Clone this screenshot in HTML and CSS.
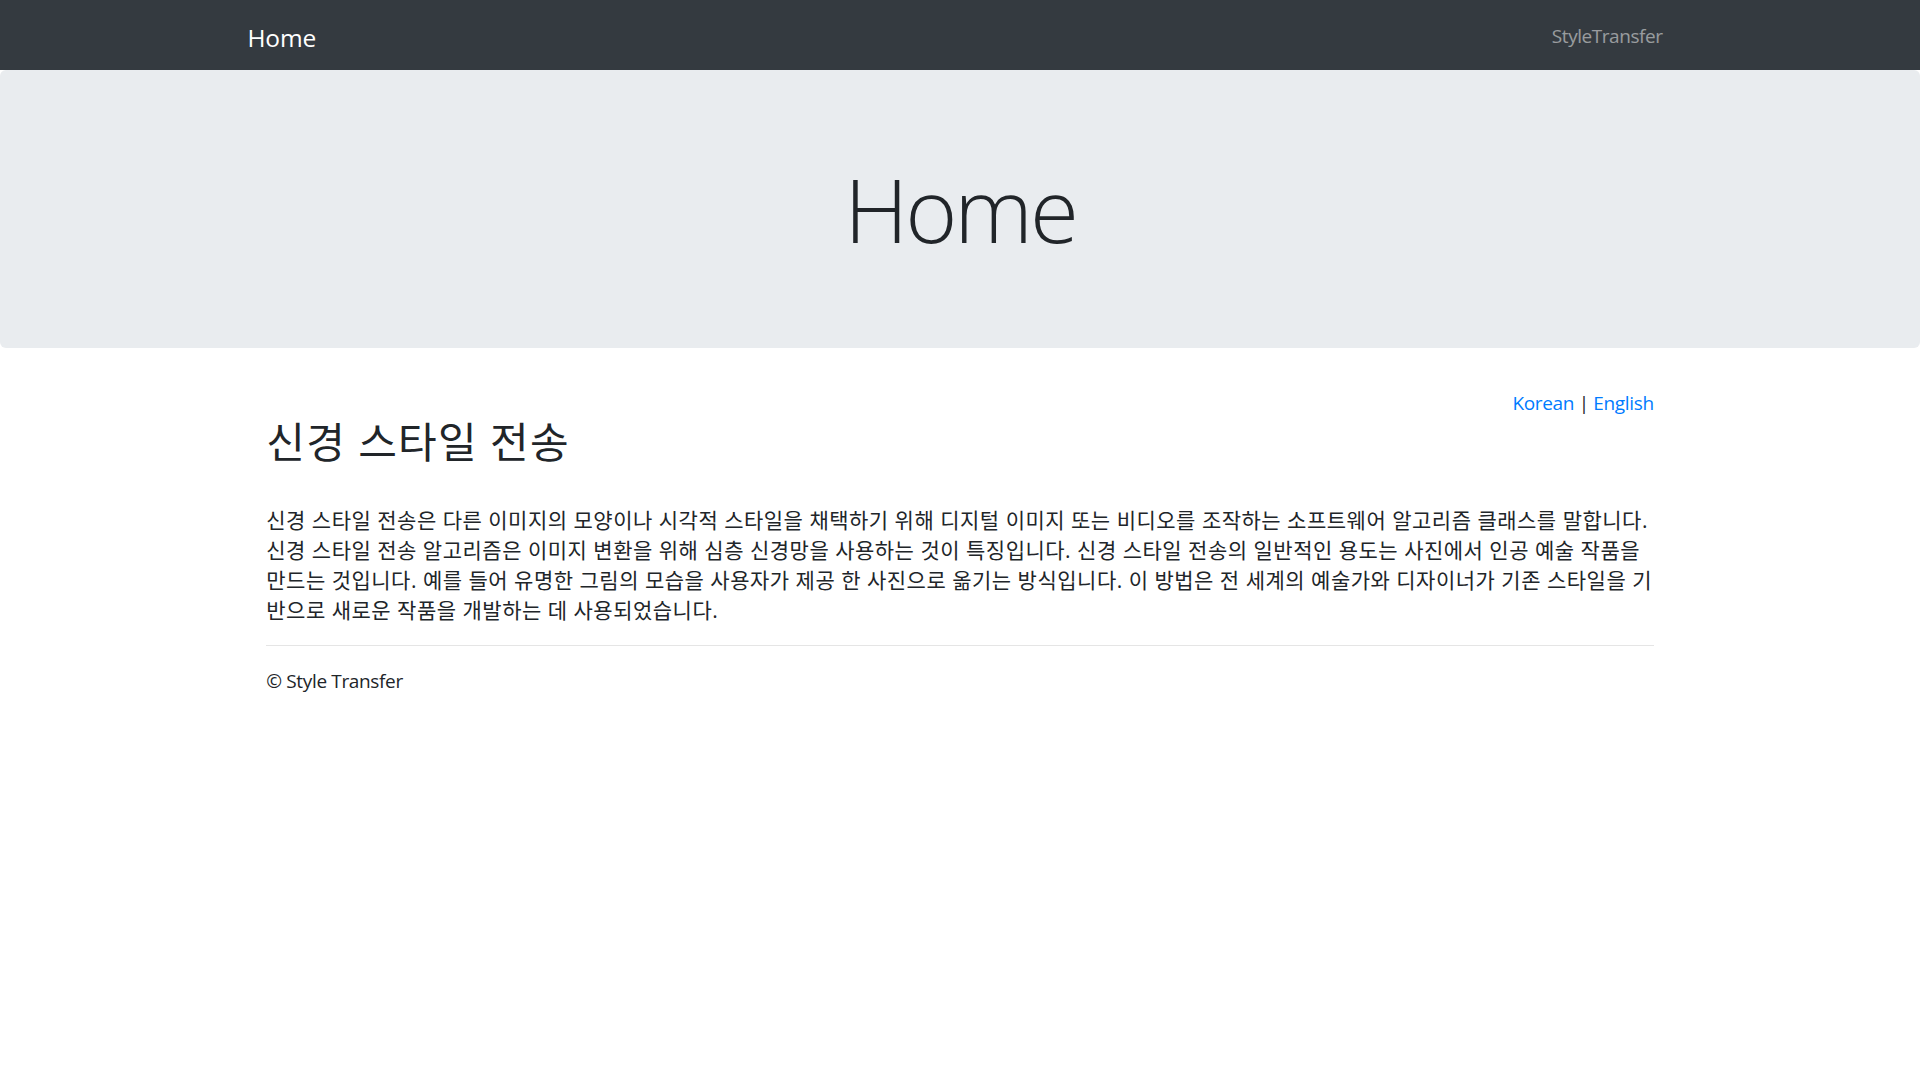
FILE: index.html
```html
<!DOCTYPE html>
<html lang="ko">
<head>
<meta charset="utf-8">
<title>Home - StyleTransfer</title>
<link rel="stylesheet" href="styles.css">
</head>
<body>
<nav class="navbar">
  <div class="nav-container">
    <a class="brand" href="#">Home</a>
    <a class="nav-link" href="#">StyleTransfer</a>
  </div>
</nav>
<div class="jumbotron">
  <h1 class="display">Home</h1>
</div>
<div class="container">
  <div class="lang"><a href="#">Korean</a> | <a href="#">English</a></div>
  <h2 class="title">신경 스타일 전송</h2>
  <p class="body-text">신경 스타일 전송은 다른 이미지의 모양이나 시각적 스타일을 채택하기 위해 디지털 이미지 또는 비디오를 조작하는 소프트웨어 알고리즘 클래스를 말합니다. 신경 스타일 전송 알고리즘은 이미지 변환을 위해 심층 신경망을 사용하는 것이 특징입니다. 신경 스타일 전송의 일반적인 용도는 사진에서 인공 예술 작품을 만드는 것입니다. 예를 들어 유명한 그림의 모습을 사용자가 제공 한 사진으로 옮기는 방식입니다. 이 방법은 전 세계의 예술가와 디자이너가 기존 스타일을 기반으로 새로운 작품을 개발하는 데 사용되었습니다.</p>
  <hr class="divider">
  <footer>
    <p class="footer-text">© Style Transfer</p>
  </footer>
</div>
</body>
</html>
```
FILE: styles.css
```css
* { box-sizing: border-box; }
html, body { margin: 0; padding: 0; }
body {
  font-family: "Open Sans", "Noto Sans CJK KR", sans-serif;
  font-size: 19px;
  letter-spacing: -0.35px;
  line-height: 30px;
  color: #212529;
  background: #fff;
}
a { text-decoration: none; }

.navbar {
  background: #343a40;
  padding: 10px 20px;
}
.nav-container {
  width: 1425px;
  margin: 0 auto;
  display: flex;
  justify-content: space-between;
  align-items: center;
}
.brand {
  color: #fff;
  font-size: 24.5px;
  letter-spacing: -0.2px;
  line-height: 37.5px;
  padding: 8.5px 0 4px;
}
.nav-link {
  color: rgba(255,255,255,.5);
  font-size: 19px;
  letter-spacing: -0.45px;
  padding: 11px 10px 9px;
}

.jumbotron {
  background: #e9ecef;
  border-radius: 6px;
  padding: 85px 40px 75px;
  margin-bottom: 40px;
  text-align: center;
}
.display {
  margin: 0 0 10px;
  font-size: 89px;
  font-weight: 300;
  letter-spacing: -3px;
  line-height: 108px;
}

.container {
  width: 1425px;
  margin: 0 auto;
  padding: 0 18.75px;
}
.lang {
  text-align: right;
  margin: 0;
}
.lang a { color: #007bff; }
.title {
  font-size: 42px;
  font-weight: 400;
  letter-spacing: 1.25px;
  line-height: 48px;
  margin: 0 0 39px;
}
.body-text {
  font-size: 21px;
  letter-spacing: 0.5px;
  margin: 0 0 20px;
}
.divider {
  border: 0;
  border-top: 1px solid rgba(0,0,0,.1);
  margin: 20px 0;
}
.footer-text { margin: 0 0 20px; }
```
